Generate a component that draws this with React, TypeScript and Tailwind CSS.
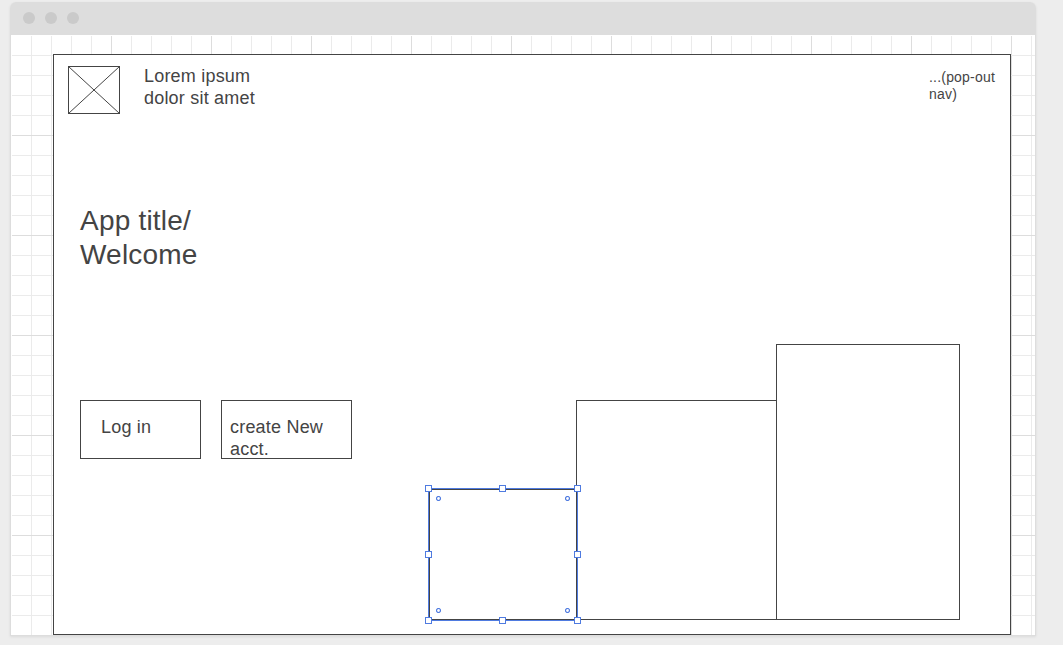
import React from "react";

const ink = "border border-[#444]";

const handles = [
  "-left-1 -top-1",
  "left-[70px] -top-1",
  "-right-1 -top-1",
  "-left-1 top-[62px]",
  "-right-1 top-[62px]",
  "-left-1 -bottom-1",
  "left-[70px] -bottom-1",
  "-right-1 -bottom-1",
];

const corners = [
  "left-[7px] top-[7px]",
  "right-[7px] top-[7px]",
  "left-[7px] bottom-[7px]",
  "right-[7px] bottom-[7px]",
];

function GridLines() {
  const lines = (count: number) => Array.from({ length: count }, (_, i) => i + 1);
  return (
    <svg className="absolute inset-0" width="1024" height="600" shapeRendering="crispEdges" aria-hidden="true">
      {lines(51).map((i) => (
        <rect key={`v${i}`} x={i * 20} y={1} width={1} height={599} fill={i % 5 ? "#ebebeb" : "#dddddd"} />
      ))}
      {lines(29).map((i) => (
        <rect key={`h${i}`} x={1} y={i * 20} width={1023} height={1} fill={i % 5 ? "#ebebeb" : "#dddddd"} />
      ))}
    </svg>
  );
}

function TitleBar() {
  return (
    <div className="flex h-[33px] items-start gap-2.5 rounded-t-md bg-[#ddd] pl-[13px] pt-2.5">
      {[0, 1, 2].map((i) => (
        <span key={i} className="size-3 rounded-full bg-[#cacaca]" />
      ))}
    </div>
  );
}

function SelectedBox() {
  return (
    <div className={`relative z-10 mr-[-1px] h-[131px] w-[148px] ${ink}`}>
      <div className="absolute -inset-0.5 border border-[#4f7be0]">
        {handles.map((place) => (
          <span key={place} className={`absolute size-[7px] border border-[#4f7be0] bg-white ${place}`} />
        ))}
        {corners.map((place) => (
          <svg key={place} className={`absolute ${place}`} width="5" height="5" fill="white" stroke="#4f7be0" aria-hidden="true">
            <circle cx="2.5" cy="2.5" r="2" strokeWidth="1.2" />
          </svg>
        ))}
      </div>
    </div>
  );
}

function Artboard() {
  return (
    <main className={`relative ml-[42px] mt-[19px] flex h-[581px] w-[958px] flex-col bg-white ${ink}`}>
      <header className="flex h-[149px] items-start pl-[14px] pt-[11px]">
        <svg width="52" height="48" viewBox="0 0 52 48" fill="none" stroke="#444" aria-hidden="true">
          <rect x=".5" y=".5" width="51" height="47" />
          <path d="M.5 .5l51 47M51.5 .5l-51 47" />
        </svg>
        <p className="ml-6 mt-[-1px] text-[18px] leading-[22px]">
          Lorem ipsum
          <br />
          dolor sit amet
        </p>
        <nav className="ml-auto mr-[1px] mt-[3px] w-20 text-[14px] leading-[17px]">
          ...(pop-out
          <br />
          nav)
        </nav>
      </header>
      <h1 className="ml-[26px] text-[28px] leading-[34px]">
        App title/
        <br />
        Welcome
      </h1>
      <section className="mt-auto flex items-end pb-[14px] pl-[26px]">
        <div className="mb-[161px] flex gap-5">
          <button className={`flex h-[59px] w-[121px] items-start pl-5 pt-[15px] text-left text-[18px] leading-[22px] ${ink}`}>
            Log in
          </button>
          <button className={`flex h-[59px] w-[131px] items-start pl-2 pt-[15px] text-left text-[18px] leading-[22px] ${ink}`}>
            create New
            <br />
            acct.
          </button>
        </div>
        <div className="ml-[77px] flex items-end">
          <SelectedBox />
          <div className={`mr-[-1px] h-[220px] w-[201px] ${ink}`} />
          <div className={`h-[276px] w-[184px] ${ink}`} />
        </div>
      </section>
    </main>
  );
}

export default function App() {
  return (
    <div className="h-[645px] w-full overflow-hidden bg-[#ededed] pl-2.5 pt-0.5 font-['Liberation_Sans',Arial,sans-serif] tracking-[0.2px] text-[#444]">
      <div className="w-[1026px] rounded-t-md shadow-[0_1px_3px_rgba(0,0,0,0.08)]">
        <TitleBar />
        <div className="relative flex h-[601px] border border-t-0 border-[#ddd] bg-white">
          <GridLines />
          <Artboard />
        </div>
      </div>
    </div>
  );
}
